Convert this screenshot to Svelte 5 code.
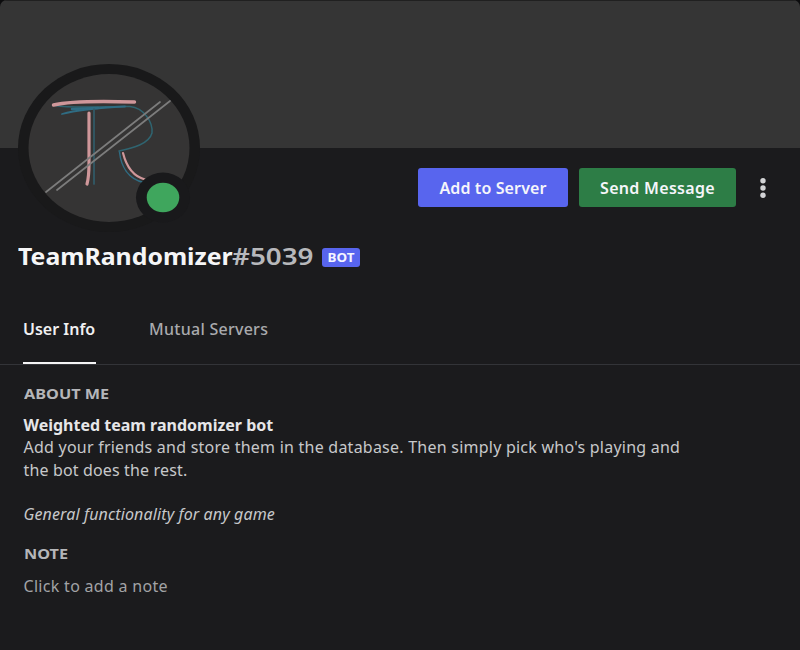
<script>
  const tabs = [
    { label: 'User Info', cls: 'info', active: true },
    { label: 'Mutual Servers', cls: 'mutual', active: false },
  ];
</script>

<main class="profile">
  <header class="banner"></header>

  <section class="top">
    <svg class="avatar" width="184" height="172" viewBox="17 62 184 172" aria-label="Avatar">
      <ellipse cx="109" cy="148" rx="91" ry="84" fill="#19191a" />
      <ellipse cx="109" cy="148" rx="80.5" ry="74" fill="#353434" />
      <g fill="none" stroke-linecap="round">
        <g stroke="#2f6c83" stroke-width="1.5">
          <path d="M55 105.500 C76 109 110 106 130 106.500 C144 108 153 122 152 133 C149 144 133 148 119 151" stroke="#2f6470" />
          <path d="M62 114 C76 110 94 108 125 106.500" stroke-width="1.800" />
          <path d="M72 109 L98 108" stroke-width="2.500" />
          <path d="M94 109 L94 184" stroke="#315c69" stroke-width="1.700" />
          <path d="M119.500 152 C121 166 128 179 144 182.500" />
        </g>
        <g stroke="#cf979a">
          <path d="M53.500 105 C72 100.500 103 101 134.500 102" stroke-width="3.4" />
          <path d="M89 113 L89 163 Q89 177 87 184" stroke-width="3.2" />
          <path d="M123 153 C126 165 132 176 145 179.500" stroke-width="2.2" />
        </g>
        <path d="M46 192 L160 102 M57 190 L170 101" stroke="#7c7c7c" stroke-width="1.700" />
      </g>
      <ellipse cx="163" cy="197.500" rx="27" ry="25" fill="#19191b" />
      <ellipse cx="163" cy="197.500" rx="16.300" ry="14.800" fill="#3fa65d" />
    </svg>
    <div class="actions">
      <button class="btn add">Add to Server</button>
      <button class="btn send">Send Message</button>
      <button class="more" aria-label="More">
        <svg width="8" height="24" viewBox="0 0 8 24" fill="#d2d3d5">
          <circle cx="4" cy="4.700" r="2.700" />
          <circle cx="4" cy="12" r="2.700" />
          <circle cx="4" cy="19.300" r="2.700" />
        </svg>
      </button>
    </div>
  </section>

  <h1>
    <span class="name"><span>TeamRandomizer</span></span><span class="tag"><span>#5039</span></span><span class="badge"><span>BOT</span></span>
  </h1>

  <nav>
    {#each tabs as tab}
      <div class="tab {tab.cls}" class:active={tab.active}>{tab.label}</div>
    {/each}
  </nav>

  <section class="body">
    <h2><span>ABOUT ME</span></h2>
    <div class="bio">
      <div><strong>Weighted team randomizer bot</strong></div>
      <div class="copy">Add your friends and store them in the database. Then simply pick who's playing and</div>
      <div class="copy last">the bot does the rest.</div>
      <div></div>
      <div><em>General functionality for any game</em></div>
    </div>
    <h2 class="second"><span>NOTE</span></h2>
    <div class="note">Click to add a note</div>
  </section>
</main>

<style>
  :global(body) { background: #0c0c0d; }
  .profile {
    box-sizing: border-box;
    width: 800px;
    height: 650px;
    overflow: hidden;
    background: #1b1b1d;
    border-radius: 7px 7px 0 0;
    font-family: "Noto Sans", "Open Sans", sans-serif;
    color: #c7c8ca;
    white-space: nowrap;
  }
  .banner { box-sizing: border-box; height: 148px; background: #353535; border-top: 1px solid #202020; }
  .top { display: flex; justify-content: space-between; height: 86px; padding: 0 33px 0 17px; }
  .avatar { position: relative; top: -86px; flex: none; }
  .actions { display: flex; align-items: center; height: 39px; margin-top: 20px; }
  button { border: 0; padding: 0; font: inherit; color: inherit; background: none; }
  .btn {
    box-sizing: border-box;
    height: 39px;
    padding-top: 1px;
    border-radius: 3px;
    color: #f5f6fa;
    font-size: 16px;
    font-weight: 600;
    line-height: 38px;
  }
  .add { width: 150px; margin-right: 11px; background: #5865ee; letter-spacing: 0.12px; }
  .send { width: 157px; background: #2d7d46; letter-spacing: 0.3px; }
  .more { display: flex; width: 8px; margin-left: 23px; }
  h1 {
    display: flex;
    align-items: center;
    height: 46px;
    margin: 0;
    padding-left: 18px;
    font-size: 24px;
    line-height: 44px;
    font-weight: 600;
  }
  h1 span span, h2 span { display: inline-block; transform-origin: left center; }
  .name { height: 46px; color: #f6f6f7; font-weight: 700; width: 214px; }
  .name span { transform: scaleX(1.034); }
  .tag { height: 46px; color: #b7b8bb; width: 81px; }
  .tag span { transform: scaleX(1.157); }
  .badge {
    width: 38px;
    height: 19px;
    margin-left: 9px;
    border-radius: 3px;
    background: #5865ee;
    color: #f5f6ff;
    font-size: 12px;
    font-weight: 700;
    line-height: 19px;
    text-align: center;
  }
  h1 .badge span { transform: scaleX(1.12); transform-origin: center; }
  nav {
    box-sizing: border-box;
    display: flex;
    gap: 53px;
    height: 85px;
    padding: 28px 0 0 23px;
    border-bottom: 1px solid #333438;
    font-size: 16px;
    font-weight: 500;
    line-height: 43px;
  }
  .tab { box-sizing: border-box; height: 56px; color: #a9aaad; letter-spacing: 0.27px; }
  .info { width: 73px; }
  .tab.active { color: #f0f0f1; border-bottom: 2px solid #f4f4f5; font-weight: 600; letter-spacing: 0; }
  .body { padding: 19px 23.500px 0; }
  h2 { margin: 0; height: 20px; color: #b5b6b9; font-size: 14px; font-weight: 700; line-height: 19px; }
  h2 span { transform: scaleX(1.16); }
  .bio { margin-top: 10px; font-size: 16px; line-height: 22.300px; }
  .bio div { height: 22.300px; }
  .copy { letter-spacing: 0.235px; }
  .last { letter-spacing: 0.15px; }
  em { letter-spacing: 0.12px; }
  strong { color: #e6e6e8; font-weight: 700; }
  .second { margin-top: 19px; }
  .note { margin-top: 10.500px; color: #a2a3a6; font-size: 16px; line-height: 22px; letter-spacing: 0.3px; }
</style>
